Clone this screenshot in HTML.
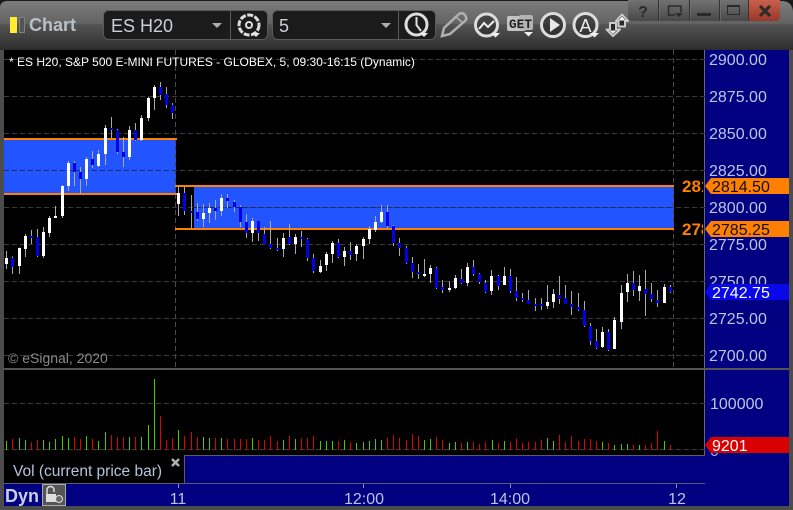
<!DOCTYPE html>
<html><head><meta charset="utf-8"><style>
html,body{margin:0;padding:0;background:#1a1a1a;width:793px;height:510px;overflow:hidden}
svg{display:block;font-family:"Liberation Sans",sans-serif}
.p{fill:#bcc4e6;font-size:16px}
.t{fill:#bcc4e6;font-size:16px;text-anchor:middle}
</style></head><body>
<svg width="793" height="510" viewBox="0 0 793 510" xmlns="http://www.w3.org/2000/svg">
<defs>
<linearGradient id="tb" x1="0" y1="0" x2="0" y2="1"><stop offset="0" stop-color="#7c7c7c"/><stop offset=".46" stop-color="#636363"/><stop offset=".48" stop-color="#545454"/><stop offset="1" stop-color="#2c2c2c"/></linearGradient>
<linearGradient id="wb" x1="0" y1="0" x2="0" y2="1"><stop offset="0" stop-color="#727272"/><stop offset="1" stop-color="#484848"/></linearGradient>
<linearGradient id="rd" x1="0" y1="0" x2="0" y2="1"><stop offset="0" stop-color="#c8604c"/><stop offset="1" stop-color="#98382a"/></linearGradient>
<clipPath id="lc"><rect x="680" y="170" width="23" height="70"/></clipPath>
</defs>
<path d="M0 510V8Q0 1 8 1H781Q793 1 793 13V510Z" fill="#4c4c4c"/>
<path d="M0 50V8Q0 1 8 1H781Q793 1 793 13V50Z" fill="url(#tb)"/>

<!-- title -->
<rect x="10" y="17" width="7" height="16" fill="#ffee30"/>
<rect x="19.5" y="17.5" width="5" height="15" fill="#555" stroke="#808080"/>
<text x="29" y="31" font-size="18" font-weight="bold" fill="#b8c0c6">Chart</text>

<rect x="103.5" y="10.5" width="164" height="29" rx="5" fill="#1b1b1b" stroke="#5a5a5a"/>
<path d="M230.5 11V39" stroke="#5a5a5a"/>
<text x="111" y="32" font-size="18" fill="#c8d0de">ES H20</text>
<path d="M212 23h10l-5 5z" fill="#b0b0b0"/>
<circle cx="249" cy="25" r="10" fill="none" stroke="#ddd" stroke-width="3" stroke-dasharray="6 1.5"/>
<circle cx="249" cy="25" r="3" fill="none" stroke="#ddd" stroke-width="2"/>
<path d="M252 33h8l-4 4z" fill="#e8e8e8"/>

<rect x="272.5" y="10.5" width="163" height="29" rx="5" fill="#1b1b1b" stroke="#5a5a5a"/>
<path d="M398.5 11V39" stroke="#5a5a5a"/>
<text x="279" y="32" font-size="18" fill="#c8d0de">5</text>
<path d="M381 23h10l-5 5z" fill="#b0b0b0"/>

<!-- clock -->
<circle cx="416.5" cy="24.5" r="10.5" fill="none" stroke="#ddd" stroke-width="3"/>
<path d="M416.5 17V25L421 31" fill="none" stroke="#ddd" stroke-width="2"/>
<path d="M420 33h8l-4 4z" fill="#f0f0f0"/>
<!-- pencil -->
<path d="M442 36L444 28L459 14Q462 12 465 15L466 17Q467 19 465 21L450 34Z" fill="none" stroke="#b0b0b0" stroke-width="2.5"/>
<path d="M456 17L463 23" stroke="#b0b0b0" stroke-width="1.5"/>
<!-- chart circle -->
<circle cx="486.5" cy="25" r="11" fill="#2b2b2b" fill-opacity=".6" stroke="#ddd" stroke-width="3"/>
<path d="M479 29L484 23L488 27L494 21" fill="none" stroke="#eee" stroke-width="2"/>
<path d="M491 33h9l-4.500 4.500z" fill="#f0f0f0"/>
<!-- GET -->
<rect x="507" y="16" width="19" height="15" rx="2" fill="#c4c4c4"/>
<rect x="519" y="15" width="14" height="15" rx="2" fill="#b4b4b4"/>
<text x="509" y="28" font-size="13" font-weight="bold" font-family="Liberation Mono" fill="#222" textLength="23" lengthAdjust="spacingAndGlyphs">GET</text>
<path d="M524 32h9l-4.500 4.500z" fill="#f0f0f0"/>
<!-- play -->
<circle cx="553" cy="25" r="11.500" fill="#2b2b2b" fill-opacity=".7" stroke="#ddd" stroke-width="3"/>
<path d="M550 18V32L560 25Z" fill="#e8e8e8"/>
<!-- A -->
<circle cx="585.500" cy="25" r="11.500" fill="#2b2b2b" fill-opacity=".6" stroke="#ddd" stroke-width="3"/>
<text x="585.500" y="32" font-size="18" text-anchor="middle" fill="#eee">A</text>
<path d="M590 33h9l-4.500 4.500z" fill="#f0f0f0"/>
<!-- arrows -->
<path d="M613 36L606.500 29.500H610V23H616V29.500H620Z" fill="#2a2a2a" stroke="#ccc" stroke-width="2" stroke-linejoin="round"/>
<path d="M622 14.500L628 21H625V26.500H618.500V21H616Z" fill="#2a2a2a" stroke="#ccc" stroke-width="2" stroke-linejoin="round"/>
<path d="M622 16.500L625.500 20.500H618.500Z" fill="#fff"/><path d="M613 34L609.500 30.500H616.500Z" fill="#eee"/>

<!-- window buttons -->
<path d="M628 0H780V16Q780 21 775 21H633Q628 21 628 16Z" fill="url(#wb)"/>
<path d="M748 0H780V16Q780 21 775 21H748Z" fill="url(#rd)"/>
<path d="M658.500 0V21M689.500 0V21M719.500 0V21M748.500 0V21" stroke="#333"/>
<path d="M659.500 0V21M690.500 0V21M720.500 0V21" stroke="#7a7a7a" stroke-opacity=".5"/>
<text x="643" y="17" font-size="16" font-weight="bold" text-anchor="middle" fill="#2a2a2a">?</text>
<path d="M681 12V6H668.500V15H675" fill="none" stroke="#2a2a2a" stroke-width="1.500"/><path d="M675 13h8l-4 4z" fill="#2a2a2a"/>
<rect x="697" y="13" width="14" height="3" fill="#2a2a2a"/>
<rect x="727.500" y="5.500" width="12" height="9" fill="none" stroke="#2a2a2a"/><rect x="727" y="5" width="13" height="2" fill="#2a2a2a"/>
<path d="M760 6L770 16M770 6L760 16" stroke="#2a2a2a" stroke-width="3"/>

<!-- price pane -->
<rect x="4" y="50" width="700" height="318" fill="#000"/>
<rect x="704" y="50" width="85" height="456" fill="#000080"/>
<rect x="704" y="50" width="1" height="434" fill="#6a6a6a"/>

<!-- bands -->
<rect x="4" y="140" width="172" height="53" fill="#2255ff"/>
<rect x="194" y="187" width="480" height="41" fill="#2255ff"/>

<!-- grid -->
<g stroke="#3a3a3a" stroke-dasharray="5 3" fill="none">
<path d="M4 59.500H708M4 96.500H708M4 133.500H708M4 207.500H708M4 244.500H708M4 281.500H708M4 318.500H708M4 355.500H708M4 170.500H708"/>
<path d="M175.500 50V368M673.500 50V368" stroke="#484848"/>
</g>
<path d="M4 170.500H176M194 207.500H674" stroke="#1a2a66" stroke-dasharray="5 3"/>
<path d="M4 139H177M4 194H177M175 186H674M175 229H674" stroke="#ff8000" stroke-width="2"/>

<!-- candles A -->
<g transform="translate(.1667 80) scale(.333333)" shape-rendering="crispEdges" fill="none">
<path stroke="#a8a8a8" stroke-width="3" d="M19 513V567M37 529V582M58 502V582M76 462V531M94 450V492M112 447V531M130 441V534M148 408V471M166 378V414M187 315V414M205 243V333M223 243V318M241 261V342M259 231V318M277 213V264M295 210V261M316 135V255M334 111V174M352 147V222M370 171V261M388 138V240M406 129V183M424 105V183M445 51V123M463 15V90M481 6V60M499 21V84M517 69V117M535 318V408M553 321V405M574 345V447M592 369V423M610 372V441M628 369V429M646 360V420M664 342V408"/>
<path stroke="#fff" stroke-width="9" d="M19 534V552M58 504V558M76 468V507M130 456V528M148 414V459M166 408V414M187 318V408M205 249V318M259 237V297M295 222V258M316 144V222M388 150V231M424 114V180M445 54V114M463 21V54M535 339V372M610 399V417M628 384V399M664 354V393"/>
<path stroke="#0000e6" stroke-width="9" d="M37 534V561M94 468V474M112 471V528M223 249V276M241 276V297M277 237V255M334 144V150M352 150V216M370 216V231M406 150V180M481 21V45M499 42V75M517 75V99M553 339V393M574 393V399M592 396V417M646 384V393"/>
</g>
<!-- candles B -->
<g transform="translate(170.1667 170) scale(.333333)" shape-rendering="crispEdges" fill="none">
<path stroke="#a8a8a8" stroke-width="3" d="M172 72V114M193 90V126M211 105V171M229 132V204M247 144V216M265 153V213M283 171V222M301 153V237M322 204V243M340 189V261M358 162V225M376 192V252M394 183V231M412 204V273M430 252V309M451 270V309M469 246V303M487 213V279M505 207V264M523 231V288M541 216V270M559 222V273M580 201V267M598 168V222M616 138V186M634 105V159M652 105V174M670 165V228M688 204V258"/>
<path stroke="#fff" stroke-width="9" d="M247 153V189M340 204V237M376 201V222M451 288V306M469 252V285M487 219V252M523 243V261M559 228V252M580 207V228M598 177V207M616 156V180M634 126V156"/>
<path stroke="#0000e6" stroke-width="9" d="M172 84V93M193 96V111M211 111V156M229 156V189M265 153V189M283 192V222M301 222V234M322 234V240M358 201V222M394 201V207M412 207V264M430 264V303M505 219V261M541 243V255M652 126V168M670 168V219M688 219V234"/>
</g>
<!-- candles C -->
<g transform="translate(400.1667 230) scale(.333333)" shape-rendering="crispEdges" fill="none">
<path stroke="#a8a8a8" stroke-width="3" d="M19 48V102M37 81V144M55 102V147M73 87V141M91 105V159M109 111V177M127 150V189M148 153V186M166 135V177M184 117V162M202 99V168M220 90V138M238 129V162M256 150V189M274 120V195M295 135V180M313 111V165M331 117V189M349 141V213M367 189V216M385 180V222M406 204V243M424 204V240M442 165V237M460 177V234M478 138V222M496 165V222M514 183V255M535 189V243M553 213V291M571 279V345M589 297V357M607 291V354M625 297V363M643 261V357M664 165V297M682 132V216M700 123V198M718 135V213M736 120V258M754 159V216M772 180V231M793 162V219M811 165V189"/>
<path stroke="#fff" stroke-width="9" d="M73 132V138M91 114V132M148 174V180M166 144V174M202 111V159M274 138V183M313 138V165M442 216V228M460 192V216M607 306V351M643 270V357M664 189V276M682 159V186M718 168V183M793 171V219"/>
<path stroke="#0000e6" stroke-width="9" d="M19 54V99M37 99V126M55 126V132M109 114V174M127 171V180M184 147V159M220 111V132M238 132V156M256 159V186M295 138V168M331 138V183M349 183V204M367 204V210M385 210V222M406 222V228M424 222V228M478 195V207M496 204V222M514 222V231M535 231V240M553 240V288M571 288V333M589 333V354M625 306V360M700 159V180M736 177V192M754 192V207M772 210V219M811 171V186"/>
</g>

<text x="9" y="66" font-size="12" fill="#fff">* ES H20, S&amp;P 500 E-MINI FUTURES - GLOBEX, 5, 09:30-16:15 (Dynamic)</text>
<text x="8" y="363" font-size="14" fill="#8a8a8a">© eSignal, 2020</text>

<!-- price labels -->
<text class="p" x="709" y="65">2900.00</text>
<text class="p" x="709" y="102">2875.00</text>
<text class="p" x="709" y="139">2850.00</text>
<text class="p" x="709" y="176">2825.00</text>
<text class="p" x="709" y="213">2800.00</text>
<text class="p" x="709" y="250">2775.00</text>
<text class="p" x="709" y="287">2750.00</text>
<text class="p" x="709" y="324">2725.00</text>
<text class="p" x="709" y="361">2700.00</text>

<g clip-path="url(#lc)" font-size="17" font-weight="bold" fill="#ff8000">
<text x="682" y="192">2814.50</text>
<text x="682" y="235">2785.25</text>
</g>
<path d="M705 186L711 178H789V194H711Z" fill="#ff8000"/>
<text x="712" y="192" font-size="16" fill="#111">2814.50</text>
<path d="M705 229L711 221H789V237H711Z" fill="#ff8000"/>
<text x="712" y="235" font-size="16" fill="#111">2785.25</text>
<path d="M705 292L711 284H789V300H711Z" fill="#0808e8"/>
<text x="712" y="298" font-size="16" fill="#fff">2742.75</text>

<!-- separator -->
<rect x="4" y="368" width="785" height="2" fill="#555"/>
<rect x="705" y="368" width="84" height="2" fill="#555"/>

<!-- volume pane -->
<rect x="4" y="370" width="700" height="85" fill="#000"/>
<rect x="704" y="370" width="1" height="114" fill="#6a6a6a"/>
<path d="M4 403.500H709M4 449.500H709" stroke="#3a3a3a" stroke-dasharray="5 3"/>
<g transform="translate(.1667 370) scale(.333333)" stroke-width="3" fill="none" shape-rendering="crispEdges">
<path stroke="#44cc00" d="M19 213V240M58 204V240M76 210V240M130 210V240M148 216V240M166 207V240M187 198V240M205 204V240M259 198V240M295 213V240M316 186V240M388 201V240M424 201V240M445 165V240M463 27V240M535 180V240M610 201V240M628 204V240M664 204V240M757 204V240"/>
<path stroke="#e00000" d="M37 207V240M94 216V240M112 210V240M223 201V240M241 207V240M277 207V240M334 195V240M352 201V240M370 201V240M406 201V240M481 138V240M499 210V240M517 204V240M553 198V240M574 186V240M592 201V240M646 204V240M682 207V240M703 207V240M721 207V240M739 207V240M775 210V240"/>
</g>
<g transform="translate(260.1667 370) scale(.333333)" stroke-width="3" fill="none" shape-rendering="crispEdges">
<path stroke="#44cc00" d="M70 210V240M106 207V240M181 213V240M199 213V240M217 213V240M253 210V240M289 219V240M310 216V240M328 213V240M346 207V240M364 210V240M493 210V240M511 207V240M568 219V240M586 216V240M622 216V240M697 210V240M733 213V240"/>
<path stroke="#e00000" d="M13 210V240M31 198V240M52 213V240M88 198V240M124 204V240M142 204V240M160 198V240M235 213V240M271 216V240M382 204V240M400 195V240M418 204V240M439 210V240M457 192V240M475 198V240M529 201V240M547 210V240M604 219V240M640 216V240M658 222V240M676 216V240M715 219V240M751 216V240M769 207V240"/>
</g>
<g transform="translate(520.1667 370) scale(.333333)" stroke-width="3" fill="none" shape-rendering="crispEdges">
<path stroke="#44cc00" d="M82 204V240M100 213V240M247 216V240M283 225V240M304 222V240M322 222V240M358 225V240M433 213V240"/>
<path stroke="#e00000" d="M7 219V240M25 216V240M46 216V240M64 210V240M118 195V240M136 216V240M154 198V240M175 213V240M193 207V240M211 207V240M229 213V240M265 219V240M340 225V240M376 225V240M394 219V240M412 183V240M451 225V240"/>
</g>

<text class="p" x="710" y="409">100000</text>
<text x="710" y="456" font-size="16" style="fill:#7fb0e8">0</text>
<path d="M705 445L711 437H789V453H711Z" fill="#d80000"/>
<text x="712" y="451" font-size="16" fill="#fff">9201</text>

<!-- legend row -->
<rect x="4" y="455" width="180" height="28" fill="#000"/>
<rect x="184" y="455" width="521" height="29" fill="#000080"/>
<rect x="184" y="455" width="521" height="1" fill="#5a5a70"/>
<rect x="184" y="455" width="1" height="29" fill="#5a5a70"/>
<text x="13" y="476" font-size="15.500" fill="#b4c4de">Vol (current price bar)</text>
<path d="M172 459L179 466M179 459L172 466" stroke="#b0b0b0" stroke-width="2.500"/>

<!-- time axis -->
<rect x="4" y="484" width="785" height="22" fill="#000080"/>
<rect x="4" y="483" width="701" height="1" fill="#5a5a70"/>
<text x="5" y="502" font-size="18" font-weight="bold" fill="#c8d0e0">Dyn</text>
<rect x="42.500" y="484.500" width="23" height="21" fill="#555" stroke="#aaa"/>
<path d="M47 494V490A3.500 3.500 0 0 1 54 490V492" fill="none" stroke="#ddd" stroke-width="1.500"/>
<rect x="46" y="494" width="10" height="8" fill="#ddd"/>
<circle cx="59" cy="499" r="3.500" fill="#666" stroke="#ddd"/>
<path d="M178.500 484V488M363.500 484V488M510.500 484V488M676.500 484V488" stroke="#8890b0"/>
<text class="t" x="178" y="504">11</text>
<text class="t" x="364" y="504">12:00</text>
<text class="t" x="510" y="504">14:00</text>
<text class="t" x="677" y="504">12</text>
</svg>
</body></html>
